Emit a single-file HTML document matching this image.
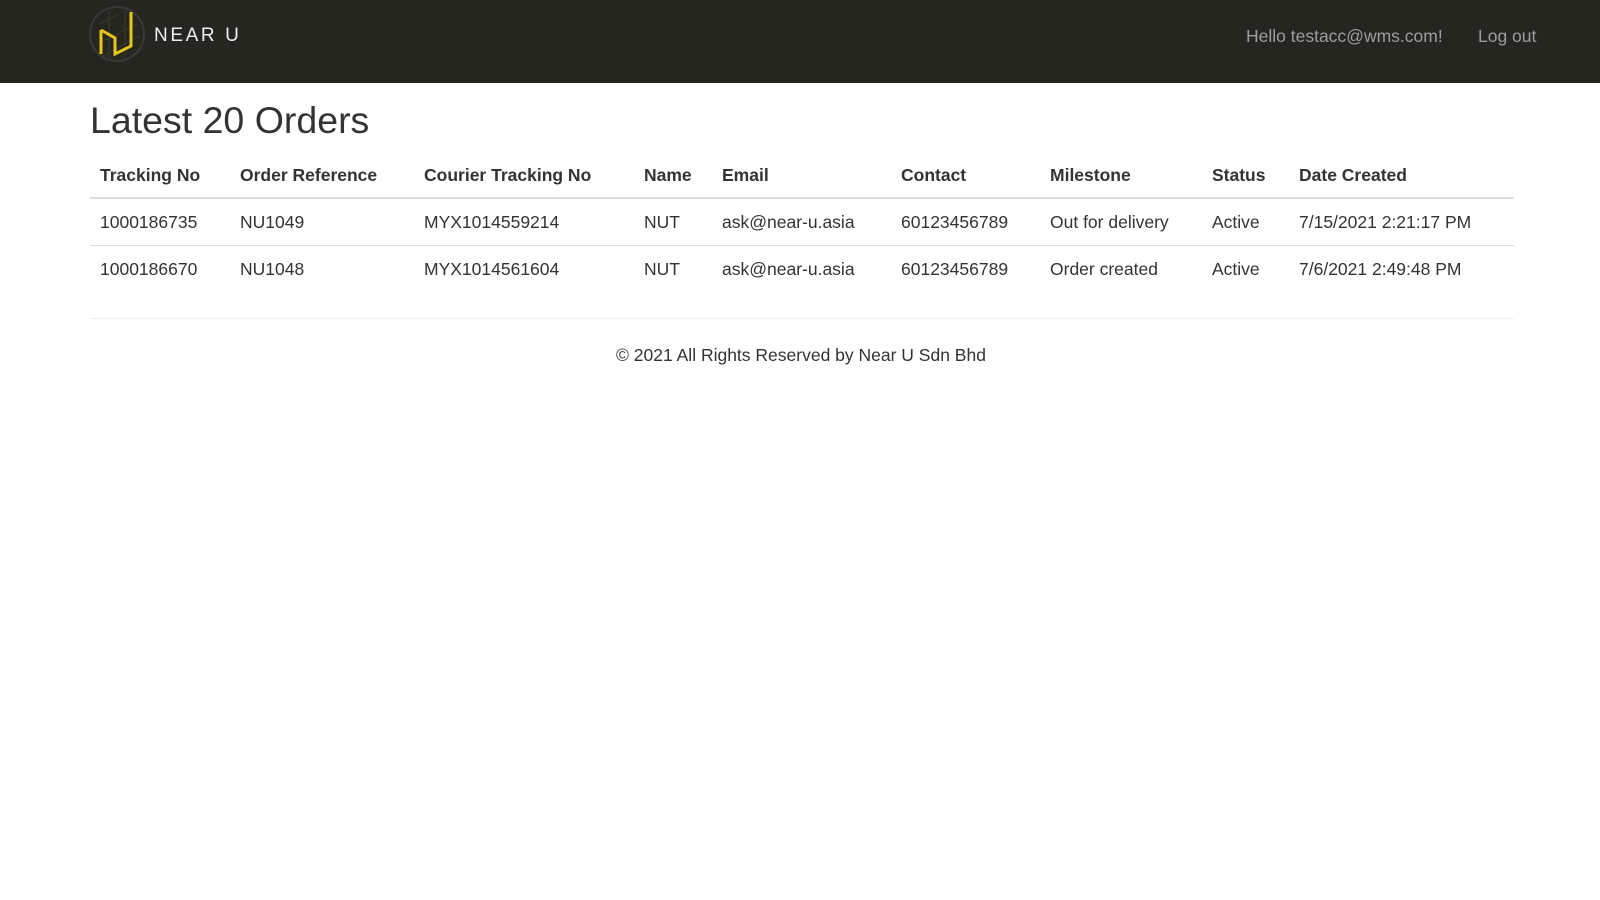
<!DOCTYPE html>
<html><head><style>
body{margin:0;background:#fff;font-family:"Liberation Sans",Arial,sans-serif;color:#333;}
.nav{position:absolute;left:0;top:0;width:1600px;height:83px;background:#262621;}
.nav .r{position:absolute;top:26px;font-size:17.5px;color:#9d9d9d;}
h1{position:absolute;left:90px;top:99px;margin:0;font-size:37.5px;font-weight:400;color:#333;}
.t{position:absolute;left:90px;width:1424px;}
.row{position:relative;height:46px;font-size:17.5px;}
.row span{position:absolute;top:13px;white-space:nowrap;}
.hd{font-weight:bold;border-bottom:2px solid #ddd;height:43px;}
.hd span{top:11px}
.b{border-bottom:1px solid #ddd;}
.foot{position:absolute;left:0;width:1602px;top:345px;text-align:center;font-size:17.5px;}
</style></head><body>
<div class="nav">
<svg width="60" height="60" viewBox="0 0 60 60" style="position:absolute;left:89px;top:6px">
<circle cx="28" cy="28" r="27" fill="none" stroke="#3a3a35" stroke-width="2"/>
<path d="M10 18 L30 8 M8 38 L48 18 M14 50 L50 30 M20 5 L20 52 M36 5 L36 52" stroke="#35352f" stroke-width="1.5" fill="none"/>
<path d="M12 24 L12 48 M12 24 L26 32 L26 48 L42 40 L42 6" stroke="#e6c619" stroke-width="3" fill="none"/>
</svg>
<div style="position:absolute;left:154px;top:25px;font-size:19px;letter-spacing:2.6px;color:#eee">ΝEAR U</div>
<div class="r" style="left:1246px">Hello testacc@wms.com!</div>
<div class="r" style="left:1478px">Log out</div>
</div>
<h1>Latest 20 Orders</h1>
<div class="t" style="top:154px">
<div class="row hd"><span style="left:10px">Tracking No</span><span style="left:150px">Order Reference</span><span style="left:334px">Courier Tracking No</span><span style="left:554px">Name</span><span style="left:632px">Email</span><span style="left:811px">Contact</span><span style="left:960px">Milestone</span><span style="left:1122px">Status</span><span style="left:1209px">Date Created</span></div>
<div class="row b"><span style="left:10px">1000186735</span><span style="left:150px">NU1049</span><span style="left:334px">MYX1014559214</span><span style="left:554px">NUT</span><span style="left:632px">ask@near-u.asia</span><span style="left:811px">60123456789</span><span style="left:960px">Out for delivery</span><span style="left:1122px">Active</span><span style="left:1209px">7/15/2021 2:21:17 PM</span></div>
<div class="row"><span style="left:10px">1000186670</span><span style="left:150px">NU1048</span><span style="left:334px">MYX1014561604</span><span style="left:554px">NUT</span><span style="left:632px">ask@near-u.asia</span><span style="left:811px">60123456789</span><span style="left:960px">Order created</span><span style="left:1122px">Active</span><span style="left:1209px">7/6/2021 2:49:48 PM</span></div>
</div>
<div style="position:absolute;left:90px;width:1424px;top:318px;border-top:1px solid #eee"></div>
<div class="foot">© 2021 All Rights Reserved by Near U Sdn Bhd</div>
</body></html>
